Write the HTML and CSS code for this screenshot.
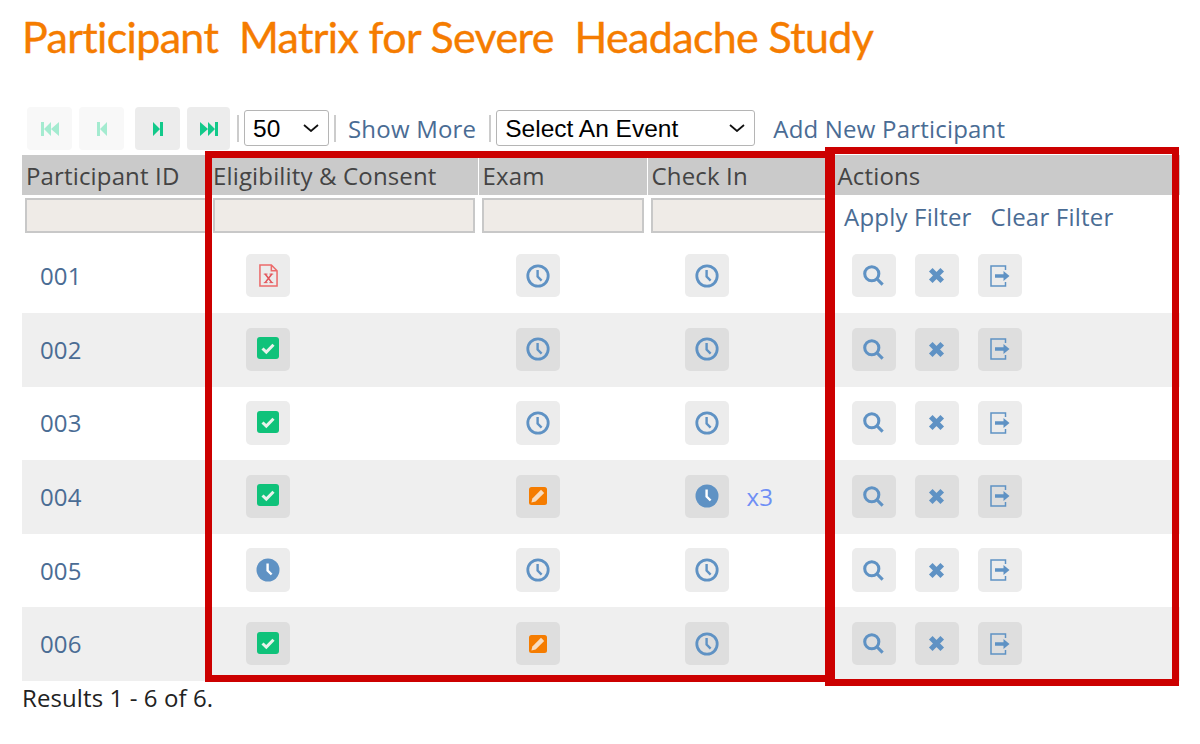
FILE: index.html
```html
<!DOCTYPE html>
<html lang="en">
<head>
<meta charset="utf-8">
<title>Participant Matrix</title>
<link rel="stylesheet" href="styles.css">
</head>
<body>
<svg class="sprite" aria-hidden="true">
  <symbol id="i-first" viewBox="0 0 18 14"><path d="M0 0h3v14H0zM10 0v14L3 7zM18 0v14L10 7z"/></symbol>
  <symbol id="i-prev" viewBox="0 0 10 14"><path d="M0 0h3v14H0zM10 0v14L3 7z"/></symbol>
  <symbol id="i-next" viewBox="0 0 10 14"><path d="M0 0v14l7-7zM7 0h3v14H7z"/></symbol>
  <symbol id="i-last" viewBox="0 0 18 14"><path d="M0 0v14l8-7zM8 0v14l7-7zM15 0h3v14h-3z"/></symbol>
  <symbol id="i-clock" viewBox="0 0 24 24"><circle cx="12" cy="12" r="10.2" fill="none" stroke="#5f92c4" stroke-width="2.8"/><path d="M11.6 6v6.600l4 4" fill="none" stroke="#5f92c4" stroke-width="2.4"/></symbol>
  <symbol id="i-clock-on" viewBox="0 0 24 24"><circle cx="12" cy="12" r="11.5" fill="#5f92c4"/><path d="M11.6 5.500v7l4 4" fill="none" stroke="#fff" stroke-width="2.4"/></symbol>
  <symbol id="i-check" viewBox="0 0 22 22"><rect width="22" height="22" rx="3" fill="#0fc27a"/><path d="M5.500 11.500l3.800 3.600 7.200-7.400" fill="none" stroke="#e9f2ec" stroke-width="3"/></symbol>
  <symbol id="i-edit" viewBox="0 0 18 18"><rect width="18" height="18" rx="2.500" fill="#f57c00"/><path d="M12 2.800l3.200 3.200-8.600 8.600-4.200 1 1-4.200z" fill="#f7dcc0"/></symbol>
  <symbol id="i-file" viewBox="0 0 20 24"><path d="M1 1h12l6 6v16H1zM13 1v6h6" fill="none" stroke="#ec6a6a" stroke-width="1.600"/><path d="M6.500 10.500l7 9M13.500 10.500l-7 9" fill="none" stroke="#e2555b" stroke-width="1.700"/><path d="M5 10.500h4M11 10.500h4M5 19.500h4M11 19.500h4" fill="none" stroke="#e2555b" stroke-width="1"/></symbol>
  <symbol id="i-search" viewBox="0 0 22 22"><circle cx="9.200" cy="9.200" r="7.400" fill="none" stroke="#5f92c4" stroke-width="3.200"/><path d="M14.600 14.600l6 6" fill="none" stroke="#5f92c4" stroke-width="3.200"/></symbol>
  <symbol id="i-x" viewBox="0 0 16 16"><path d="M2.600 2.600l10.800 10.800M13.400 2.600L2.600 13.400" fill="none" stroke="#5f92c4" stroke-width="4.800"/></symbol>
  <symbol id="i-exit" viewBox="0 0 20 22"><path d="M15.500 5V1H1v20h14.500v-4" fill="none" stroke="#5f92c4" stroke-width="1.500"/><path d="M5 9.300h8.500V6l6 5-6 5v-3.300H5z" fill="#5f92c4"/></symbol>
</svg>

<h1 class="title">Participant&nbsp; Matrix for Severe&nbsp; Headache Study</h1>

<div class="toolbar">
  <button class="pager off" type="button"><svg class="pg2"><use href="#i-first"/></svg></button>
  <button class="pager off" type="button"><svg class="pg1"><use href="#i-prev"/></svg></button>
  <button class="pager next" type="button"><svg class="pg1"><use href="#i-next"/></svg></button>
  <button class="pager last" type="button"><svg class="pg2"><use href="#i-last"/></svg></button>
  <span class="sep"></span>
  <select class="sel sel-size"><option>50</option></select>
  <span class="sep sep-b"></span>
  <a class="link more" href="#">Show More</a>
  <span class="sep sep-c"></span>
  <select class="sel sel-event"><option>Select An Event</option></select>
  <a class="link add" href="#">Add New Participant</a>
</div>

<div class="matrix">
  <div class="row head">
    <div class="th">Participant ID</div>
    <div class="th">Eligibility &amp; Consent</div>
    <div class="th">Exam</div>
    <div class="th">Check In</div>
    <div class="th">Actions</div>
  </div>
  <div class="row filters">
    <div class="fc"><input class="fi" type="text" aria-label="Participant ID"></div>
    <div class="fc"><input class="fi" type="text" aria-label="Eligibility"></div>
    <div class="fc"><input class="fi" type="text" aria-label="Exam"></div>
    <div class="fc"><input class="fi" type="text" aria-label="Check In"></div>
    <div class="fa"><a class="link" href="#">Apply Filter</a><a class="link" href="#">Clear Filter</a></div>
  </div>

  <div class="row data">
    <a class="pid" href="#">001</a>
    <div class="st"><span class="ib"><svg class="s-file"><use href="#i-file"/></svg></span></div>
    <div class="st"><span class="ib"><svg class="s-clock"><use href="#i-clock"/></svg></span></div>
    <div class="st"><span class="ib"><svg class="s-clock"><use href="#i-clock"/></svg></span></div>
    <div class="ac"><span class="ib"><svg class="s-search"><use href="#i-search"/></svg></span><span class="ib"><svg class="s-x"><use href="#i-x"/></svg></span><span class="ib"><svg class="s-exit"><use href="#i-exit"/></svg></span></div>
  </div>
  <div class="row data">
    <a class="pid" href="#">002</a>
    <div class="st"><span class="ib"><svg class="s-check"><use href="#i-check"/></svg></span></div>
    <div class="st"><span class="ib"><svg class="s-clock"><use href="#i-clock"/></svg></span></div>
    <div class="st"><span class="ib"><svg class="s-clock"><use href="#i-clock"/></svg></span></div>
    <div class="ac"><span class="ib"><svg class="s-search"><use href="#i-search"/></svg></span><span class="ib"><svg class="s-x"><use href="#i-x"/></svg></span><span class="ib"><svg class="s-exit"><use href="#i-exit"/></svg></span></div>
  </div>
  <div class="row data">
    <a class="pid" href="#">003</a>
    <div class="st"><span class="ib"><svg class="s-check"><use href="#i-check"/></svg></span></div>
    <div class="st"><span class="ib"><svg class="s-clock"><use href="#i-clock"/></svg></span></div>
    <div class="st"><span class="ib"><svg class="s-clock"><use href="#i-clock"/></svg></span></div>
    <div class="ac"><span class="ib"><svg class="s-search"><use href="#i-search"/></svg></span><span class="ib"><svg class="s-x"><use href="#i-x"/></svg></span><span class="ib"><svg class="s-exit"><use href="#i-exit"/></svg></span></div>
  </div>
  <div class="row data">
    <a class="pid" href="#">004</a>
    <div class="st"><span class="ib"><svg class="s-check"><use href="#i-check"/></svg></span></div>
    <div class="st"><span class="ib"><svg class="s-edit"><use href="#i-edit"/></svg></span></div>
    <div class="st"><span class="ib"><svg class="s-clock"><use href="#i-clock-on"/></svg></span><span class="count">x3</span></div>
    <div class="ac"><span class="ib"><svg class="s-search"><use href="#i-search"/></svg></span><span class="ib"><svg class="s-x"><use href="#i-x"/></svg></span><span class="ib"><svg class="s-exit"><use href="#i-exit"/></svg></span></div>
  </div>
  <div class="row data">
    <a class="pid" href="#">005</a>
    <div class="st"><span class="ib"><svg class="s-clock"><use href="#i-clock-on"/></svg></span></div>
    <div class="st"><span class="ib"><svg class="s-clock"><use href="#i-clock"/></svg></span></div>
    <div class="st"><span class="ib"><svg class="s-clock"><use href="#i-clock"/></svg></span></div>
    <div class="ac"><span class="ib"><svg class="s-search"><use href="#i-search"/></svg></span><span class="ib"><svg class="s-x"><use href="#i-x"/></svg></span><span class="ib"><svg class="s-exit"><use href="#i-exit"/></svg></span></div>
  </div>
  <div class="row data">
    <a class="pid" href="#">006</a>
    <div class="st"><span class="ib"><svg class="s-check"><use href="#i-check"/></svg></span></div>
    <div class="st"><span class="ib"><svg class="s-edit"><use href="#i-edit"/></svg></span></div>
    <div class="st"><span class="ib"><svg class="s-clock"><use href="#i-clock"/></svg></span></div>
    <div class="ac"><span class="ib"><svg class="s-search"><use href="#i-search"/></svg></span><span class="ib"><svg class="s-x"><use href="#i-x"/></svg></span><span class="ib"><svg class="s-exit"><use href="#i-exit"/></svg></span></div>
  </div>

  <div class="mark mark-a"></div>
  <div class="mark mark-b"></div>
</div>

<p class="results">Results 1 - 6 of 6.</p>
</body>
</html>
```

FILE: styles.css
```css
* { box-sizing: border-box; }

html, body { margin: 0; padding: 0; background: #fff; }

body {
  width: 1200px;
  height: 744px;
  overflow: hidden;
  padding-left: 22px;
  font-family: "Open Sans", "Liberation Sans", sans-serif;
  font-size: 24px;
  letter-spacing: .15px;
  color: #222;
}

.sprite { position: absolute; width: 0; height: 0; }

.title {
  margin: 0;
  height: 107px;
  padding-top: 10px;
  font-family: Lato, "Open Sans", sans-serif;
  font-size: 43px;
  line-height: 54px;
  letter-spacing: -.65px;
  font-weight: 400;
  -webkit-text-stroke: .4px #f57c00;
  color: #f57c00;
  white-space: nowrap;
}

.toolbar {
  display: flex;
  align-items: flex-start;
  height: 48px;
  padding-left: 5px;
}

.pager {
  display: flex;
  align-items: center;
  justify-content: center;
  width: 45px;
  height: 43px;
  margin: 0 7px 0 0;
  padding: 0;
  border: 0;
  border-radius: 4px;
  background: #ececec;
  fill: #12c98a;
}

.pager.off { background: #f8f8f8; fill: #a4ebd0; }
.pager.next { margin-left: 4px; }
.pager.last { width: 43px; margin-right: 0; }

.pg1 { width: 10px; height: 14px; }
.pg2 { width: 18px; height: 14px; }

.sep {
  flex: none;
  width: 2px;
  height: 27px;
  margin: 8px 5px 0 7px;
  background: #ccc;
}

.sep-b { margin: 8px 0 0 5px; }
.sep-c { margin: 8px 5px 0 13px; }

.sel {
  flex: none;
  height: 36px;
  margin-top: 3px;
  padding: 0 28px 0 8px;
  border: 1px solid #b5b5b5;
  border-radius: 3px;
  appearance: none;
  background-color: #fff;
  background-image: url("data:image/svg+xml,%3Csvg xmlns='http://www.w3.org/2000/svg' viewBox='0 0 16 8'%3E%3Cpath d='M1 1l7 6 7-6' fill='none' stroke='%23111' stroke-width='1.800'/%3E%3C/svg%3E");
  background-repeat: no-repeat;
  background-size: 16px 8px;
  background-position: right 9px center;
  font-family: "Liberation Sans", Arial, sans-serif;
  font-size: 24.500px;
  letter-spacing: 0;
  color: #000;
}

.sel-size { width: 85px; }
.sel-event { width: 259px; }

.link {
  color: #4a6c94;
  text-decoration: none;
  line-height: 44px;
  white-space: nowrap;
  letter-spacing: .2px;
}

.more { margin-left: 12px; }
.add { margin-left: 18px; }

.matrix { position: relative; width: 1158px; }

.row {
  display: grid;
  grid-template-columns: 188px 268px 169px 187px 346px;
}

.head { height: 40px; }

.th {
  padding-left: 4px;
  background: #cacaca;
  color: #444;
  line-height: 41px;
  height: 40px;
  white-space: nowrap;
}

.th:nth-child(2) { padding-left: 3px; }
.th:nth-child(n+3) { border-left: 1.500px solid #fff; padding-left: 3.500px; }
.th:nth-child(5) { padding-left: 2.500px; }

.filters { height: 44.400px; }

.fc { padding: 3px 3px 0 3px; }
.fc:nth-child(n+3) { padding-left: 4px; }

.fi {
  display: block;
  width: 100%;
  height: 35px;
  border: 2px solid #c8c8c8;
  border-radius: 0;
  background: #efebe7;
}

.fa {
  display: flex;
  gap: 19px;
  padding-left: 10px;
}

.fa .link { line-height: 44px; }

.data { height: 73.600px; align-items: center; }
.data:nth-of-type(even) { background: #efefef; }

.pid {
  margin-bottom: 1px;
  padding-left: 18px;
  color: #4a6c94;
  text-decoration: none;
}

.st {
  display: flex;
  align-items: center;
  padding-left: 36px;
}

.st:nth-child(n+3) { padding-left: 37.500px; }

.ac {
  display: flex;
  align-items: center;
  gap: 19px;
  padding-left: 17.700px;
}

.ib {
  display: flex;
  flex: none;
  align-items: center;
  justify-content: center;
  width: 44px;
  height: 43.500px;
  margin-bottom: 1px;
  border-radius: 5px;
  background: #ececec;
}

.data:nth-of-type(even) .ib { background: #dedede; }

.s-clock { width: 24px; height: 24px; }
.s-check { width: 22px; height: 22px; margin-bottom: 2px; }
.s-edit { width: 18px; height: 18px; }
.s-file { width: 19px; height: 23px; }
.s-search { width: 21px; height: 21px; }
.s-x { width: 17px; height: 17px; }
.s-exit { width: 20px; height: 22px; }

.count {
  margin-left: 18px;
  color: #6f8ff5;
}

.mark {
  position: absolute;
  border: 7px solid #c00;
  pointer-events: none;
}

.mark-a { left: 183px; top: -4px; width: 630px; height: 531px; }
.mark-b { left: 803px; top: -8px; width: 354px; height: 539px; border-left-width: 10px; }

.results {
  margin: 0;
  padding-top: 1px;
  line-height: 32px;
  letter-spacing: .1px;
  color: #222;
}
```
